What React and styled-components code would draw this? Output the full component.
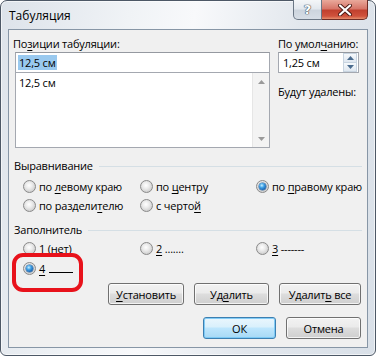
import React from "react";
import styled, { createGlobalStyle, css } from "styled-components";

const Global = createGlobalStyle`
  html, body { margin: 0; padding: 0; background: #ffffff; }
  body { font-family: "Open Sans", "Noto Sans", sans-serif; font-size: 11px; letter-spacing: -0.2px; color: #000; }
  * { box-sizing: border-box; }
`;

const Window = styled.div`
  position: relative;
  width: 376px;
  height: 356px;
  border: 1px solid #4d5866;
  border-radius: 7px 7px 6px 6px;
  background: linear-gradient(100deg, #dde3ea 0%, #f0f3f6 30%, #f8f9fb 45%, #e2e7ed 70%, #d9e0e8 100%);
  padding: 0 7px 7px 7px;
  display: flex;
  flex-direction: column;
  box-shadow: inset 0 0 0 1px rgba(255,255,255,0.6);
`;

const TitleBar = styled.div`
  height: 29px;
  display: flex;
  align-items: flex-start;
  justify-content: space-between;
`;

const Title = styled.div`
  padding: 7px 0 0 1px;
  font-size: 12px;
  letter-spacing: 0;
  line-height: 16px;
  color: #000;
`;

const Caption = styled.div`
  display: flex;
  margin-top: -1px;
`;

const CapBtn = styled.div`
  height: 20px;
  display: flex;
  align-items: center;
  justify-content: center;
  border: 1px solid #6b7785;
  border-top: none;
  ${(p) =>
    p.$close
      ? css`
          width: 46px;
          border-left: none;
          border-radius: 0 0 5px 0;
          background: linear-gradient(#e9a99b 0%, #d7776a 45%, #c1412f 55%, #d0523c 85%, #e58f6e 100%);
          border-color: #6e2c25;
        `
      : css`
          width: 29px;
          border-radius: 0 0 0 5px;
          background: linear-gradient(#f4f6f8 0%, #e3e8ee 45%, #cdd5de 55%, #d7dee6 100%);
        `}
`;

const HelpGlyph = styled.span`
  font-family: "DejaVu Sans", sans-serif;
  font-size: 13px;
  font-weight: bold;
  color: #fff;
  text-shadow: 0 0 1px #3b4654, 0 0 1px #3b4654, 0 0 1px #3b4654;
  line-height: 1;
`;

const Client = styled.div`
  flex: 1;
  border: 1px solid #8796a6;
  background: #f0f0f0;
  padding: 6px 5px 8px 5px;
  display: flex;
  flex-direction: column;
  position: relative;
`;

const Top = styled.div`
  display: grid;
  grid-template-columns: 256px 81px;
  column-gap: 8px;
`;

const Col = styled.div`
  display: flex;
  flex-direction: column;
`;

const Label = styled.div`
  line-height: 15px;
  height: 15px;
  white-space: nowrap;
  margin: ${(p) => p.$m || "0"};
`;

const U = styled.span`
  text-decoration: underline;
  text-underline-offset: 2px;
`;

const TextBox = styled.div`
  height: 21px;
  margin: 1px 0 0 1px;
  border: 1px solid #a4a8b0;
  border-top-color: #9599a0;
  background: #fff;
  display: flex;
  align-items: center;
  padding-left: 2px;
  position: relative;
  z-index: 1;
`;

const Sel = styled.span`
  background: #99c9ef;
  padding: 0 1px;
  line-height: 15px;
`;

const ListBox = styled.div`
  height: 76px;
  margin: -1px 0 0 1px;
  border: 1px solid #a4a8b0;
  background: #fff;
  display: flex;
`;

const ListItems = styled.div`
  flex: 1;
  padding: 2px 0 0 3px;
  line-height: 15px;
`;

const ScrollBar = styled.div`
  width: 17px;
  background: #f3f3f3;
  border-left: 1px solid #e6e6e6;
  display: flex;
  flex-direction: column;
  justify-content: space-between;
`;

const ScrollArrow = styled.div`
  height: 17px;
  display: flex;
  align-items: center;
  justify-content: center;
`;

const SpinBox = styled.div`
  height: 21px;
  margin-top: 1px;
  border: 1px solid #a4a8b0;
  border-top-color: #9599a0;
  background: #fff;
  display: flex;
  align-items: center;
  justify-content: space-between;
  padding: 0 0 0 4px;
`;

const SpinBtns = styled.div`
  width: 14px;
  height: 19px;
  display: flex;
  flex-direction: column;
  margin-right: 1px;
`;

const SpinBtn = styled.div`
  flex: 1;
  display: flex;
  align-items: center;
  justify-content: center;
  border: 1px solid #c8d4e0;
  background: linear-gradient(#f6f9fc, #dfe7f0);
  & + & { border-top: none; }
`;

const GroupHead = styled.div`
  display: flex;
  align-items: center;
  gap: 6px;
  height: 15px;
  line-height: 15px;
  margin-top: ${(p) => p.$mt}px;
  &::after {
    content: "";
    flex: 1;
    border-top: 1px solid #d5dfe5;
    margin-top: 1px;
  }
`;

const RadioGrid = styled.div`
  display: grid;
  grid-template-columns: 117px 116px 1fr;
  padding-left: 9px;
  margin-top: ${(p) => p.$mt}px;
`;

const RadioItem = styled.label`
  display: flex;
  align-items: center;
  gap: 3px;
  height: ${(p) => p.$h || 19}px;
  white-space: nowrap;
`;

const RadioDot = styled.span`
  width: 13px;
  height: 13px;
  border-radius: 50%;
  border: 1px solid #8a8a8a;
  background: radial-gradient(circle at 45% 40%, #ffffff 0%, #ececec 35%, #cfcfcf 75%, #bdbdbd 100%);
  display: flex;
  align-items: center;
  justify-content: center;
  flex: none;
  &::after {
    content: "";
    display: ${(p) => (p.$checked ? "block" : "none")};
    width: 7px;
    height: 7px;
    border-radius: 50%;
    background: radial-gradient(circle at 40% 35%, #c8f0ff 0%, #43a3e6 35%, #145fae 75%, #0b3b7c 100%);
    box-shadow: 0 0 0 0.5px #2a5f94;
  }
`;

const Line = styled.span`
  display: inline-block;
  width: 24px;
  border-bottom: 1px solid #000;
  height: 11px;
  margin-left: 4px;
  vertical-align: baseline;
`;

const BtnRow = styled.div`
  display: flex;
  justify-content: flex-end;
  gap: ${(p) => p.$gap || 10}px;
  margin-top: ${(p) => p.$mt}px;
  padding-right: 1px;
`;

const Button = styled.div`
  width: ${(p) => p.$w}px;
  height: 22px;
  border: 1px solid ${(p) => (p.$default ? "#3c7fb1" : "#707070")};
  border-radius: 3px;
  display: flex;
  align-items: center;
  justify-content: center;
  white-space: pre;
  background: ${(p) =>
    p.$default
      ? "linear-gradient(#eaf6fd 0%, #d9f0fc 45%, #bee6fd 50%, #a7d9f5 100%)"
      : "linear-gradient(#f2f2f2 0%, #ebebeb 45%, #dddddd 50%, #cfcfcf 100%)"};
  box-shadow: inset 0 0 0 1px ${(p) => (p.$default ? "rgba(120,200,245,0.9)" : "rgba(255,255,255,0.75)")};
`;

const Annotation = styled.div`
  position: absolute;
  left: 3px;
  top: 223px;
  width: 71px;
  height: 39px;
  border: 4px solid #e8121b;
  border-radius: 11px;
  pointer-events: none;
`;

function Radio({ checked, children, h }) {
  return (
    <RadioItem $h={h}>
      <RadioDot $checked={checked} />
      <span>{children}</span>
    </RadioItem>
  );
}

function Tri({ up, color = "#9a9a9a", w = 7 }) {
  return (
    <svg width={w} height="4" viewBox="0 0 7 4">
      {up ? <path d="M0 4 L3.5 0 L7 4 Z" fill={color} /> : <path d="M0 0 L7 0 L3.5 4 Z" fill={color} />}
    </svg>
  );
}

export default function App() {
  return (
    <>
      <Global />
      <Window>
        <TitleBar>
          <Title>Табуляция</Title>
          <Caption>
            <CapBtn>
              <HelpGlyph>?</HelpGlyph>
            </CapBtn>
            <CapBtn $close>
              <svg width="14" height="12" viewBox="0 0 14 12">
                <path d="M2 1.5 L12 10.5 M12 1.5 L2 10.5" stroke="#4a1a14" strokeWidth="4" strokeLinecap="round" />
                <path d="M2 1.5 L12 10.5 M12 1.5 L2 10.5" stroke="#ffffff" strokeWidth="2.2" strokeLinecap="round" />
              </svg>
            </CapBtn>
          </Caption>
        </TitleBar>
        <Client>
          <Top>
            <Col>
              <Label $m="0 0 0 -1px">
                По<U>з</U>иции табуляции:
              </Label>
              <TextBox>
                <Sel>12,5 см</Sel>
              </TextBox>
              <ListBox>
                <ListItems>12,5 см</ListItems>
                <ScrollBar>
                  <ScrollArrow>
                    <Tri up />
                  </ScrollArrow>
                  <ScrollArrow>
                    <Tri />
                  </ScrollArrow>
                </ScrollBar>
              </ListBox>
            </Col>
            <Col>
              <Label>
                По умол<U>ч</U>анию:
              </Label>
              <SpinBox>
                <span>1,25 см</span>
                <SpinBtns>
                  <SpinBtn>
                    <Tri up color="#4a6b8e" />
                  </SpinBtn>
                  <SpinBtn>
                    <Tri color="#4a6b8e" />
                  </SpinBtn>
                </SpinBtns>
              </SpinBox>
              <Label $m="11px 0 0 0">Будут удалены:</Label>
            </Col>
          </Top>

          <GroupHead $mt={10}>Выравнивание</GroupHead>
          <RadioGrid $mt={4}>
            <Radio>
              по <U>л</U>евому краю
            </Radio>
            <Radio>
              по <U>ц</U>ентру
            </Radio>
            <Radio checked>
              по <U>п</U>равому краю
            </Radio>
            <Radio>
              по раздели<U>т</U>елю
            </Radio>
            <Radio>
              с черто<U>й</U>
            </Radio>
          </RadioGrid>

          <GroupHead $mt={7}>Заполнитель</GroupHead>
          <RadioGrid $mt={2}>
            <Radio>
              <U>1</U> (нет)
            </Radio>
            <Radio>
              <U>2</U> .......
            </Radio>
            <Radio>
              <U>3</U> -------
            </Radio>
            <Radio checked h={20}>
              <U>4</U>
              <Line />
            </Radio>
          </RadioGrid>

          <BtnRow $mt={5} $gap={10}>
            <Button $w={76}>
              <span>
                <U>У</U>становить
              </span>
            </Button>
            <Button $w={75}>
              <span>
                Уд<U>а</U>лить
              </span>
            </Button>
            <Button $w={82}>
              <span>
                Удалит<U>ь</U> все
              </span>
            </Button>
          </BtnRow>
          <BtnRow $mt={12} $gap={10}>
            <Button $w={73} $default>
              <span>ОК</span>
            </Button>
            <Button $w={75}>
              <span>Отмена</span>
            </Button>
          </BtnRow>
          <Annotation />
        </Client>
      </Window>
    </>
  );
}
